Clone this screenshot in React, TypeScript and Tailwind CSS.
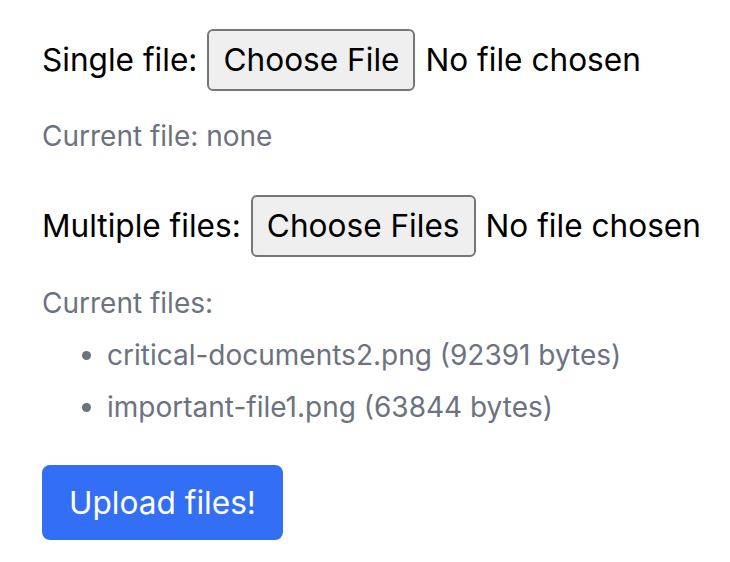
import React from "react";

const FileButton = ({ label }: { label: string }) => (
  <span className="inline-flex h-[62px] shrink-0 items-center whitespace-nowrap rounded-[6px] border-2 border-[#767676] bg-[#efefef] px-[14px] text-black">
    {label}
  </span>
);

export default function App() {
  return (
    <div
      className="min-h-screen bg-white px-[42px] pt-[29px] text-[28px] text-black"
      style={{ fontFamily: "Inter, 'Noto Sans', sans-serif" }}
    >
      <div className="flex h-[62px] items-center whitespace-nowrap text-[31.6px]">
        <span>Single file:</span>
        <span className="ml-[10px] flex items-center">
          <FileButton label="Choose File" />
          <span className="ml-[10px]">No file chosen</span>
        </span>
      </div>
      <p className="mt-[25px] leading-[40px] text-[#6b7280]">Current file: none</p>

      <div className="mt-[39px] flex h-[62px] items-center whitespace-nowrap text-[31.6px]">
        <span>Multiple files:</span>
        <span className="ml-[10px] flex items-center">
          <FileButton label="Choose Files" />
          <span className="ml-[10px]">No file chosen</span>
        </span>
      </div>
      <p className="mt-[26px] leading-[40px] text-[#6b7280]">Current files:</p>
      <ul className="mt-[6px] list-disc pl-[65px] leading-[52px] text-[#6b7280]">
        <li>critical-documents2.png (92391 bytes)</li>
        <li>important-file1.png (63844 bytes)</li>
      </ul>

      <button
        type="button"
        className="mt-[32px] h-[75px] whitespace-nowrap rounded-[8px] bg-[#326ff4] px-[27px] text-[31.6px] text-white"
      >
        Upload files!
      </button>
    </div>
  );
}
